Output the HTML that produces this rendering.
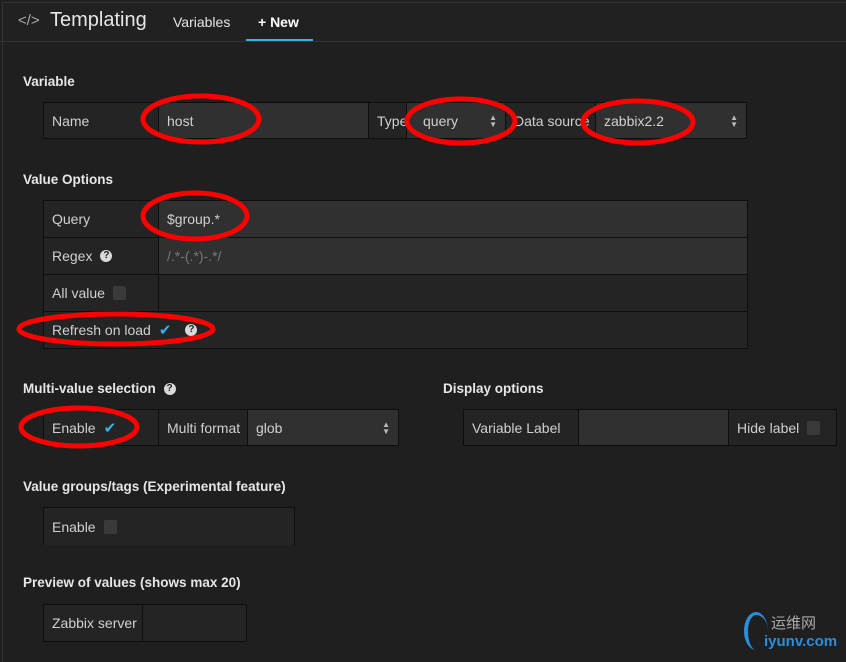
<!DOCTYPE html>
<html><head><meta charset="utf-8"><style>
*{box-sizing:border-box;margin:0;padding:0}
body{width:846px;height:657px;background:#1f1f1f;font-family:"Liberation Sans",Arial,sans-serif;color:#d8d9da;position:relative;overflow:hidden;font-size:14px}
.a{position:absolute}
.hdr{left:0;top:0;width:846px;height:42px;background:#212121;border-bottom:1px solid #333}
.frame{left:2px;top:2px;width:850px;height:660px;border-left:1px solid #333;border-top:1px solid #333}
h5{position:absolute;font-size:13.5px;font-weight:bold;color:#e6e6e6}
.c{position:absolute;border:1px solid #0e0e0e;background:#242424;display:flex;align-items:center;padding-left:8px;font-size:14px;color:#d0d0d0}
.in{background:#303030}
.cb{display:inline-block;width:13px;height:14px;background:#3a3a3a;border-radius:2px;margin-left:8px}
.chk{color:#33b5e5;font-size:15px;margin-left:8px}
.q{display:inline-block;width:12px;height:12px;border-radius:50%;background:#d8d9da;color:#1f1f1f;font-size:10px;font-weight:bold;text-align:center;line-height:12px;margin-left:8px;vertical-align:middle}
.arr{position:absolute;right:8px;top:11px;font-size:8px;line-height:7px;color:#bbb}
</style></head><body>
<div class="a hdr"></div>
<div class="a frame"></div>
<div class="a" style="left:18px;top:12px;font-size:15px;color:#aaa">&lt;/&gt;</div>
<div class="a" style="left:50px;top:9px;font-size:20px;color:#e6e6e6">Templating</div>
<div class="a" style="left:173px;top:14px;font-size:14px;color:#e6e6e6">Variables</div>
<div class="a" style="left:258px;top:14px;font-size:14px;color:#fff;font-weight:bold">+ New</div>
<div class="a" style="left:246px;top:39px;width:67px;height:2px;background:#33b5e5"></div>

<h5 style="left:23px;top:74px">Variable</h5>
<div class="c" style="left:43px;top:102px;width:116px;height:37px">Name</div>
<div class="c in" style="left:158px;top:102px;width:211px;height:37px">host</div>
<div class="c" style="left:368px;top:102px;width:39px;height:37px">Type</div>
<div class="c in" style="left:406px;top:102px;width:100px;height:37px;padding-left:16px">query<span class="arr">▲<br>▼</span></div>
<div class="c" style="left:505px;top:102px;width:91px;height:37px">Data source</div>
<div class="c in" style="left:595px;top:102px;width:152px;height:37px">zabbix2.2<span class="arr">▲<br>▼</span></div>

<h5 style="left:23px;top:172px">Value Options</h5>
<div class="c" style="left:43px;top:200px;width:116px;height:38px">Query</div>
<div class="c in" style="left:158px;top:200px;width:590px;height:38px">$group.*</div>
<div class="c" style="left:43px;top:237px;width:116px;height:38px">Regex<span class="q">?</span></div>
<div class="c in" style="left:158px;top:237px;width:590px;height:38px;color:#777">/.*-(.*)-.*/</div>
<div class="c" style="left:43px;top:274px;width:116px;height:38px">All value<span class="cb"></span></div>
<div class="c" style="left:158px;top:274px;width:590px;height:38px"></div>
<div class="c" style="left:43px;top:311px;width:705px;height:38px">Refresh on load<span class="chk">✔</span><span class="q" style="margin-left:14px">?</span></div>

<h5 style="left:23px;top:381px">Multi-value selection <span class="q" style="margin-left:4px">?</span></h5>
<div class="c" style="left:43px;top:409px;width:116px;height:37px">Enable<span class="chk">✔</span></div>
<div class="c" style="left:158px;top:409px;width:90px;height:37px">Multi format</div>
<div class="c in" style="left:247px;top:409px;width:152px;height:37px">glob<span class="arr">▲<br>▼</span></div>

<h5 style="left:443px;top:381px">Display options</h5>
<div class="c" style="left:463px;top:409px;width:116px;height:37px">Variable Label</div>
<div class="c in" style="left:578px;top:409px;width:151px;height:37px"></div>
<div class="c" style="left:728px;top:409px;width:109px;height:37px">Hide label<span class="cb"></span></div>

<h5 style="left:23px;top:479px">Value groups/tags (Experimental feature)</h5>
<div class="c" style="left:43px;top:507px;width:252px;height:38px;border-bottom:none">Enable<span class="cb"></span></div>

<h5 style="left:23px;top:575px">Preview of values (shows max 20)</h5>
<div class="c" style="left:43px;top:604px;width:100px;height:38px">Zabbix server</div>
<div class="c" style="left:142px;top:604px;width:105px;height:38px"></div>

<div class="a" style="left:744px;top:612px;width:24px;height:38px;border-left:4px solid #2a8fd8;border-top:3px solid #2a8fd8;border-radius:50%"></div>
<div class="a" style="left:771px;top:612px;font-size:15px;color:#aaa;font-family:'Liberation Sans','Noto Sans CJK SC',sans-serif">运维网</div>
<div class="a" style="left:764px;top:633px;font-size:15px;color:#2a8fd8;font-weight:bold">iyunv.com</div>

<svg class="a" style="left:0;top:0" width="846" height="657">
<g fill="none" stroke="#f00" stroke-width="5">
<ellipse cx="201" cy="119" rx="58" ry="23"/>
<ellipse cx="461" cy="121" rx="54" ry="22"/>
<ellipse cx="638" cy="122" rx="55" ry="21"/>
<ellipse cx="195" cy="216" rx="52" ry="23"/>
<ellipse cx="116" cy="329" rx="97" ry="15"/>
<ellipse cx="79" cy="427" rx="58" ry="19"/>
</g></svg>
</body></html>
